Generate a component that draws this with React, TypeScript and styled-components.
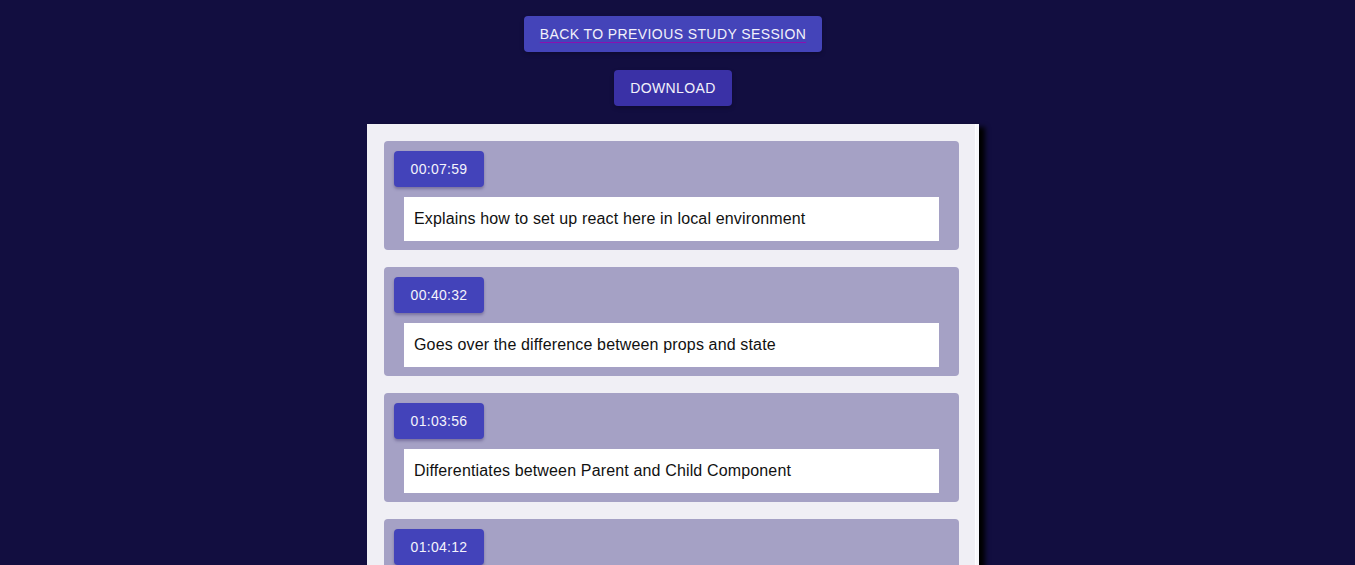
import React from 'react';
import styled, { createGlobalStyle } from 'styled-components';

const GlobalStyle = createGlobalStyle`
    body {
        margin: 0;
        background: #120e40;
        font-family: "Liberation Sans", Arial, sans-serif;
    }
`;

const Page = styled.div`
    display: flex;
    flex-direction: column;
    align-items: center;
    padding: 16px 9px 0 0;
    gap: 18px;
    min-height: 565px;
    box-sizing: border-box;
    overflow: hidden;
`;

const ActionButton = styled.a<{ $dark?: boolean }>`
    display: inline-flex;
    align-items: center;
    justify-content: center;
    height: 36px;
    padding: 0 16px;
    box-sizing: border-box;
    border-radius: 4px;
    background: ${(p) => (p.$dark ? '#3a31a6' : '#4444b9')};
    color: #f2f1fb;
    font-size: 14px;
    letter-spacing: 0.4px;
    text-transform: uppercase;
    text-decoration: ${(p) => (p.$dark ? 'none' : 'underline')};
    text-decoration-color: #8a10b0;
    text-underline-offset: 3px;
    box-shadow: 0 2px 4px rgba(0, 0, 0, 0.25);
    cursor: pointer;
`;

const Panel = styled.div`
    width: 612px;
    box-sizing: border-box;
    background: #f0eff5;
    padding: 17px 20px 0 17px;
    display: flex;
    flex-direction: column;
    gap: 17px;
    box-shadow: inset -3px 0 0 #f7f7fb, inset -4px 0 0 #fdfdff, 6px 3px 5px #000;
`;

const Card = styled.div`
    background: #a5a1c5;
    border-radius: 4px;
    padding: 10px 20px 9px 10px;
    display: flex;
    flex-direction: column;
    align-items: flex-start;
    gap: 10px;
`;

const TimeButton = styled.button`
    width: 90px;
    height: 36px;
    border: none;
    border-radius: 4px;
    background: #4343ba;
    color: #f4f3fc;
    font-family: "Liberation Sans", Arial, sans-serif;
    font-size: 14px;
    letter-spacing: 0.3px;
    box-shadow: 0 2px 3px rgba(40, 30, 90, 0.35);
    cursor: pointer;
`;

const Note = styled.div`
    align-self: stretch;
    margin-left: 10px;
    height: 44px;
    background: #fff;
    display: flex;
    align-items: center;
    padding: 0 10px;
    font-size: 16px;
    letter-spacing: 0.15px;
    color: #111;
`;

const notes = [
    { time: '00:07:59', text: 'Explains how to set up react here in local environment' },
    { time: '00:40:32', text: 'Goes over the difference between props and state' },
    { time: '01:03:56', text: 'Differentiates between Parent and Child Component' },
    { time: '01:04:12', text: 'Shows how to pass props down to a child component' },
];

const App: React.FC = () => {
    return (
        <>
            <GlobalStyle />
            <Page>
                <ActionButton href="#">Back to previous study session</ActionButton>
                <ActionButton $dark>Download</ActionButton>
                <Panel>
                    {notes.map((n) => (
                        <Card key={n.time}>
                            <TimeButton>{n.time}</TimeButton>
                            <Note>{n.text}</Note>
                        </Card>
                    ))}
                </Panel>
            </Page>
        </>
    );
};

export default App;
